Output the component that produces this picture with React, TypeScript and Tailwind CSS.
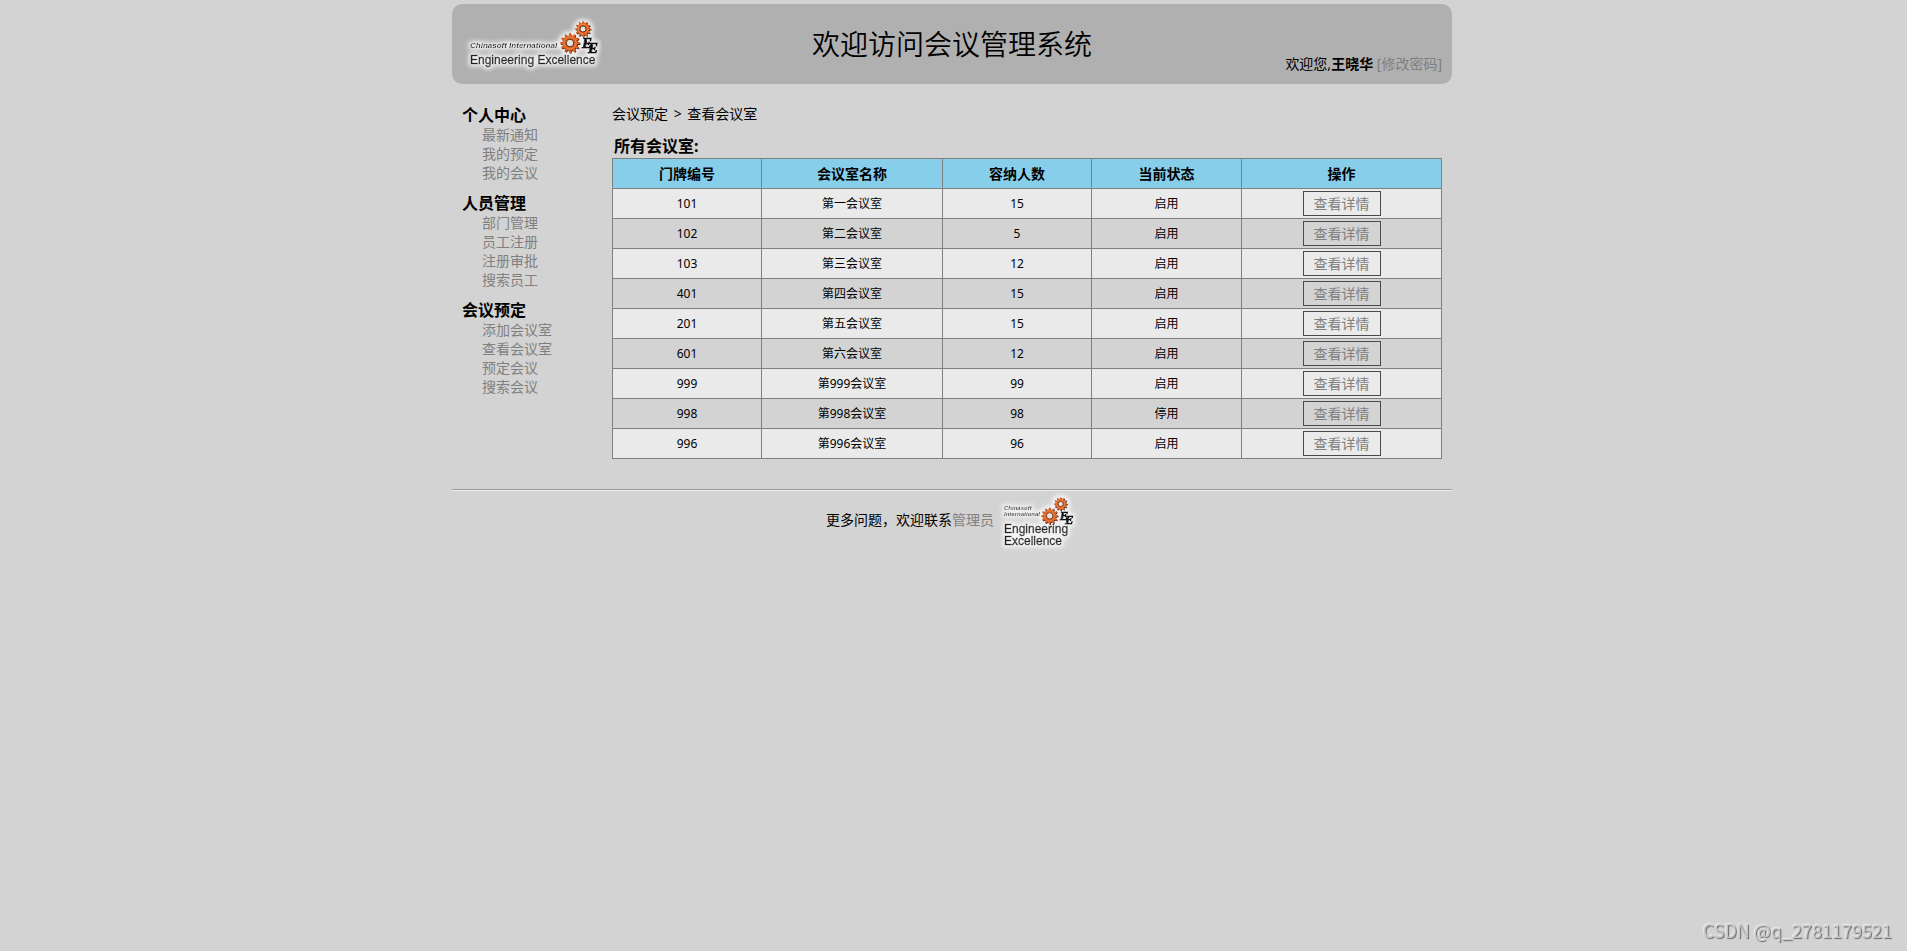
import { useId } from "react"

const menu = [
  { title: "个人中心", links: ["最新通知", "我的预定", "我的会议"] },
  { title: "人员管理", links: ["部门管理", "员工注册", "注册审批", "搜索员工"] },
  { title: "会议预定", links: ["添加会议室", "查看会议室", "预定会议", "搜索会议"] },
]

const rooms = [
  { no: "101", name: "第一会议室", capacity: 15, status: "启用" },
  { no: "102", name: "第二会议室", capacity: 5, status: "启用" },
  { no: "103", name: "第三会议室", capacity: 12, status: "启用" },
  { no: "401", name: "第四会议室", capacity: 15, status: "启用" },
  { no: "201", name: "第五会议室", capacity: 15, status: "启用" },
  { no: "601", name: "第六会议室", capacity: 12, status: "启用" },
  { no: "999", name: "第999会议室", capacity: 99, status: "启用" },
  { no: "998", name: "第998会议室", capacity: 98, status: "停用" },
  { no: "996", name: "第996会议室", capacity: 96, status: "启用" },
]

function gearPath(cx: number, cy: number, outer: number, inner: number, teeth: number) {
  const points: string[] = []
  for (let i = 0; i < teeth; i++) {
    const step = (Math.PI * 2) / teeth
    const corners = [
      [inner, -0.34],
      [outer, -0.16],
      [outer, 0.16],
      [inner, 0.34],
    ]
    corners.forEach(([r, offset]) => {
      const a = (i + offset) * step
      points.push(`${(cx + r * Math.cos(a)).toFixed(2)} ${(cy + r * Math.sin(a)).toFixed(2)}`)
    })
  }
  return `M${points.join("L")}Z`
}

function Gear({ cx, cy, r }: { cx: number; cy: number; r: number }) {
  return (
    <g>
      <path d={gearPath(cx + 0.7, cy + 0.9, r, r * 0.76, 12)} fill="#4a2210" />
      <path d={gearPath(cx, cy, r, r * 0.76, 12)} fill="#d9601f" />
      <circle cx={cx} cy={cy} r={r * 0.6} fill="none" stroke="#f08a4a" strokeWidth="1" />
      <circle cx={cx} cy={cy} r={r * 0.38} fill="#e4e4e4" stroke="#6b2f10" strokeWidth="1" />
    </g>
  )
}

function Emblem({ x, y, scale = 1 }: { x: number; y: number; scale?: number }) {
  return (
    <g transform={`translate(${x} ${y}) scale(${scale})`}>
      <Gear cx={22} cy={7} r={8} />
      <Gear cx={9} cy={21} r={10} />
      <g
        fontFamily="Liberation Serif, serif"
        fontStyle="italic"
        fontWeight="700"
        fontSize="15"
        fill="#111"
        stroke="#111"
        strokeWidth="1"
      >
        <text x="21" y="26">E</text>
        <text x="27" y="31">E</text>
      </g>
    </g>
  )
}

function Logo({ compact = false }: { compact?: boolean }) {
  const glow = useId()

  return (
    <svg
      width={compact ? 80 : 140}
      height={60}
      viewBox={compact ? "0 0 80 60" : "0 0 140 60"}
      role="img"
      aria-label="Chinasoft International Engineering Excellence"
      fontFamily="Liberation Sans, Arial, sans-serif"
      fill="#222"
    >
      <defs>
        <filter id={glow} x="-10%" y="-20%" width="120%" height="140%">
          <feMorphology in="SourceAlpha" operator="dilate" radius="2" />
          <feGaussianBlur stdDeviation="2" result="blur" />
          <feFlood floodColor="#fff" floodOpacity="0.8" />
          <feComposite in2="blur" operator="in" />
          <feMerge>
            <feMergeNode />
            <feMergeNode in="SourceGraphic" />
          </feMerge>
        </filter>
      </defs>
      {compact ? (
        <g filter={`url(#${glow})`}>
          <g fontSize="6" fontStyle="italic" fontWeight="700">
            <text x="6" y="18">Chinasoft</text>
            <text x="6" y="24">International</text>
          </g>
          <g fontSize="12" stroke="#222" strokeWidth="0.5">
            <text x="6" y="41">Engineering</text>
            <text x="6" y="53">Excellence</text>
          </g>
          <Emblem x={44} y={6} scale={0.85} />
        </g>
      ) : (
        <g filter={`url(#${glow})`}>
          <text x="8" y="34" fontSize="8" fontStyle="italic" fontWeight="700">
            Chinasoft International
          </text>
          <text x="8" y="50" fontSize="12" stroke="#222" strokeWidth="0.5">
            Engineering Excellence
          </text>
          <Emblem x={99} y={8} />
        </g>
      )}
    </svg>
  )
}

export default function App() {
  return (
    <div className="min-h-screen bg-[#d3d3d3] pt-1 pr-[3px] font-['Noto_Sans','Noto_Sans_CJK_SC',sans-serif] text-sm/[19px] text-black">
      <div className="mx-auto max-w-[1000px]">
        {/* Header */}
        <header className="grid h-20 grid-cols-[1fr_auto_1fr] rounded-[10px] bg-[#b0b0b0] px-2.5">
          <div className="self-center">
            <Logo />
          </div>
          <h1 className="self-center text-[28px]/[38px] font-[350]">欢迎访问会议管理系统</h1>
          <div className="self-end pb-[11px] text-right">
            欢迎您,<strong>王晓华</strong>{" "}
            <a href="#" className="text-[#808080]">[修改密码]</a>
          </div>
        </header>

        <div className="flex pt-5">
          {/* Sidebar */}
          <nav className="w-40 shrink-0 pl-2.5">
            {menu.map((group) => (
              <section key={group.title} className="mb-2.5">
                <h2 className="text-base/[22px] font-bold">{group.title}</h2>
                <ul className="-mt-px pl-5">
                  {group.links.map((link) => (
                    <li key={link}>
                      <a href="#" className="text-[#808080]">{link}</a>
                    </li>
                  ))}
                </ul>
              </section>
            ))}
          </nav>

          {/* Room list */}
          <main className="flex-1 pr-[11px]">
            <div>
              会议预定 <span className="mx-0.5">&gt;</span> 查看会议室
            </div>
            <table className="mt-3 w-full table-fixed border-collapse text-center text-xs">
              <caption className="px-0.5 py-px text-left text-base/[21px] font-bold">所有会议室:</caption>
              <colgroup>
                <col className="w-[149px]" />
                <col className="w-[181px]" />
                <col className="w-[149px]" />
                <col className="w-[150px]" />
                <col className="w-[200px]" />
              </colgroup>
              <thead>
                <tr className="h-[30px] bg-[#87ceeb] text-sm/[19px]">
                  {["门牌编号", "会议室名称", "容纳人数", "当前状态", "操作"].map((label) => (
                    <th key={label} scope="col" className="border border-[#808080]">{label}</th>
                  ))}
                </tr>
              </thead>
              <tbody>
                {rooms.map((room) => (
                  <tr key={room.no} className="h-[30px] odd:bg-[#eaeaea]">
                    <td className="border border-[#808080]">{room.no}</td>
                    <td className="border border-[#808080]">{room.name}</td>
                    <td className="border border-[#808080]">{room.capacity}</td>
                    <td className="border border-[#808080]">{room.status}</td>
                    <td className="border border-[#808080]">
                      <button
                        type="button"
                        className="mx-auto block border border-[#4a4a4a] px-2.5 py-0.5 text-sm/[19px] text-[#808080]"
                      >
                        查看详情
                      </button>
                    </td>
                  </tr>
                ))}
              </tbody>
            </table>
          </main>
        </div>

        {/* Footer */}
        <footer className="mt-[30px] flex h-16 items-center justify-center gap-1 border-t border-[#9a9a9a] shadow-[inset_0_1px_0_#eeeeee]">
          <p className="pb-1">
            更多问题，欢迎联系<a href="#" className="text-[#808080]">管理员</a>
          </p>
          <Logo compact />
        </footer>
      </div>

      <div className="fixed right-[15px] bottom-2.5 font-['Noto_Sans_CJK_SC',sans-serif] text-lg/[22px] text-[#c8c8c8] [text-shadow:1px_1px_1px_#666,-1px_-1px_1px_#eee]">
        CSDN @q_2781179521
      </div>
    </div>
  )
}
